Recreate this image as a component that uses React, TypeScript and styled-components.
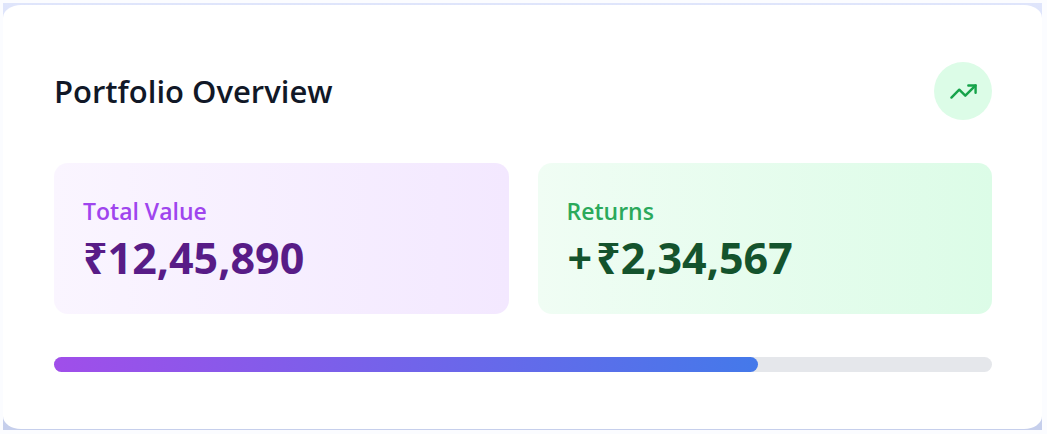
import React from "react";
import styled, { createGlobalStyle } from "styled-components";
import { TrendingUp } from "lucide-react";

const GlobalStyle = createGlobalStyle`
  *, *::before, *::after { box-sizing: border-box; }
  body {
    margin: 0;
    background: #fbfcff;
    font-family: "Open Sans", "Noto Sans", sans-serif;
  }
  h2, p { margin: 0; }
`;

const Backdrop = styled.main`
  margin: 3px 5px 4px 3px;
  padding: 2px 0 1px;
  background: linear-gradient(to bottom, #dfe5fb, #c6cfec);
`;

const Card = styled.section`
  padding: 57px 50px 57px 51px;
  border-radius: 18px / 13px;
  background: #ffffff;
`;

const Header = styled.header`
  display: flex;
  align-items: center;
  justify-content: space-between;
  margin-bottom: 43px;
`;

const Title = styled.h2`
  font-size: 31px;
  line-height: 50px;
  font-weight: 600;
  color: #111827;
`;

const IconBadge = styled.div`
  display: flex;
  align-items: center;
  justify-content: center;
  width: 58px;
  height: 58px;
  border-radius: 50%;
  background: #dcfce7;
  color: #16a34a;
`;

const StatGrid = styled.div`
  display: grid;
  grid-template-columns: 1fr 1fr;
  gap: 29px;
  margin-bottom: 43px;
`;

const Stat = styled.div<{ $from: string; $to: string }>`
  padding: 30px 29px 28px;
  border-radius: 14px;
  background: linear-gradient(to right, ${(p) => p.$from}, ${(p) => p.$to});
`;

const StatLabel = styled.p<{ $color: string }>`
  font-size: 23px;
  line-height: 36px;
  font-weight: 600;
  color: ${(p) => p.$color};
`;

const StatValue = styled.p<{ $color: string }>`
  font-size: 43px;
  line-height: 57px;
  font-weight: 700;
  color: ${(p) => p.$color};
`;

const Sign = styled.span`
  margin: 0 4px 0 1px;
`;

const Track = styled.div`
  height: 15px;
  border-radius: 8px;
  background: #e5e7eb;
`;

const Fill = styled.div`
  height: 100%;
  border-radius: 8px;
  background: linear-gradient(to right, #a04eea, #4479ea);
`;

const stats = [
  { label: "Total Value", sign: "", value: "₹12,45,890", from: "#faf5ff", to: "#f3e8ff", ink: "#9f45ee", strong: "#581c87" },
  { label: "Returns", sign: "+", value: "₹2,34,567", from: "#f0fdf4", to: "#dcfce7", ink: "#2ba95b", strong: "#14532d" },
];

const progress = 75;

export default function App() {
  return (
    <>
      <GlobalStyle />
      <Backdrop>
        <Card>
          <Header>
            <Title>Portfolio Overview</Title>
            <IconBadge>
              <TrendingUp size={29} strokeWidth={2} aria-hidden="true" />
            </IconBadge>
          </Header>
          <StatGrid>
            {stats.map((s) => (
              <Stat key={s.label} $from={s.from} $to={s.to}>
                <StatLabel $color={s.ink}>{s.label}</StatLabel>
                <StatValue $color={s.strong}>
                  {s.sign && <Sign>{s.sign}</Sign>}
                  {s.value}
                </StatValue>
              </Stat>
            ))}
          </StatGrid>
          <Track role="progressbar" aria-label="Portfolio progress" aria-valuenow={progress} aria-valuemin={0} aria-valuemax={100}>
            <Fill style={{ width: `${progress}%` }} />
          </Track>
        </Card>
      </Backdrop>
    </>
  );
}
